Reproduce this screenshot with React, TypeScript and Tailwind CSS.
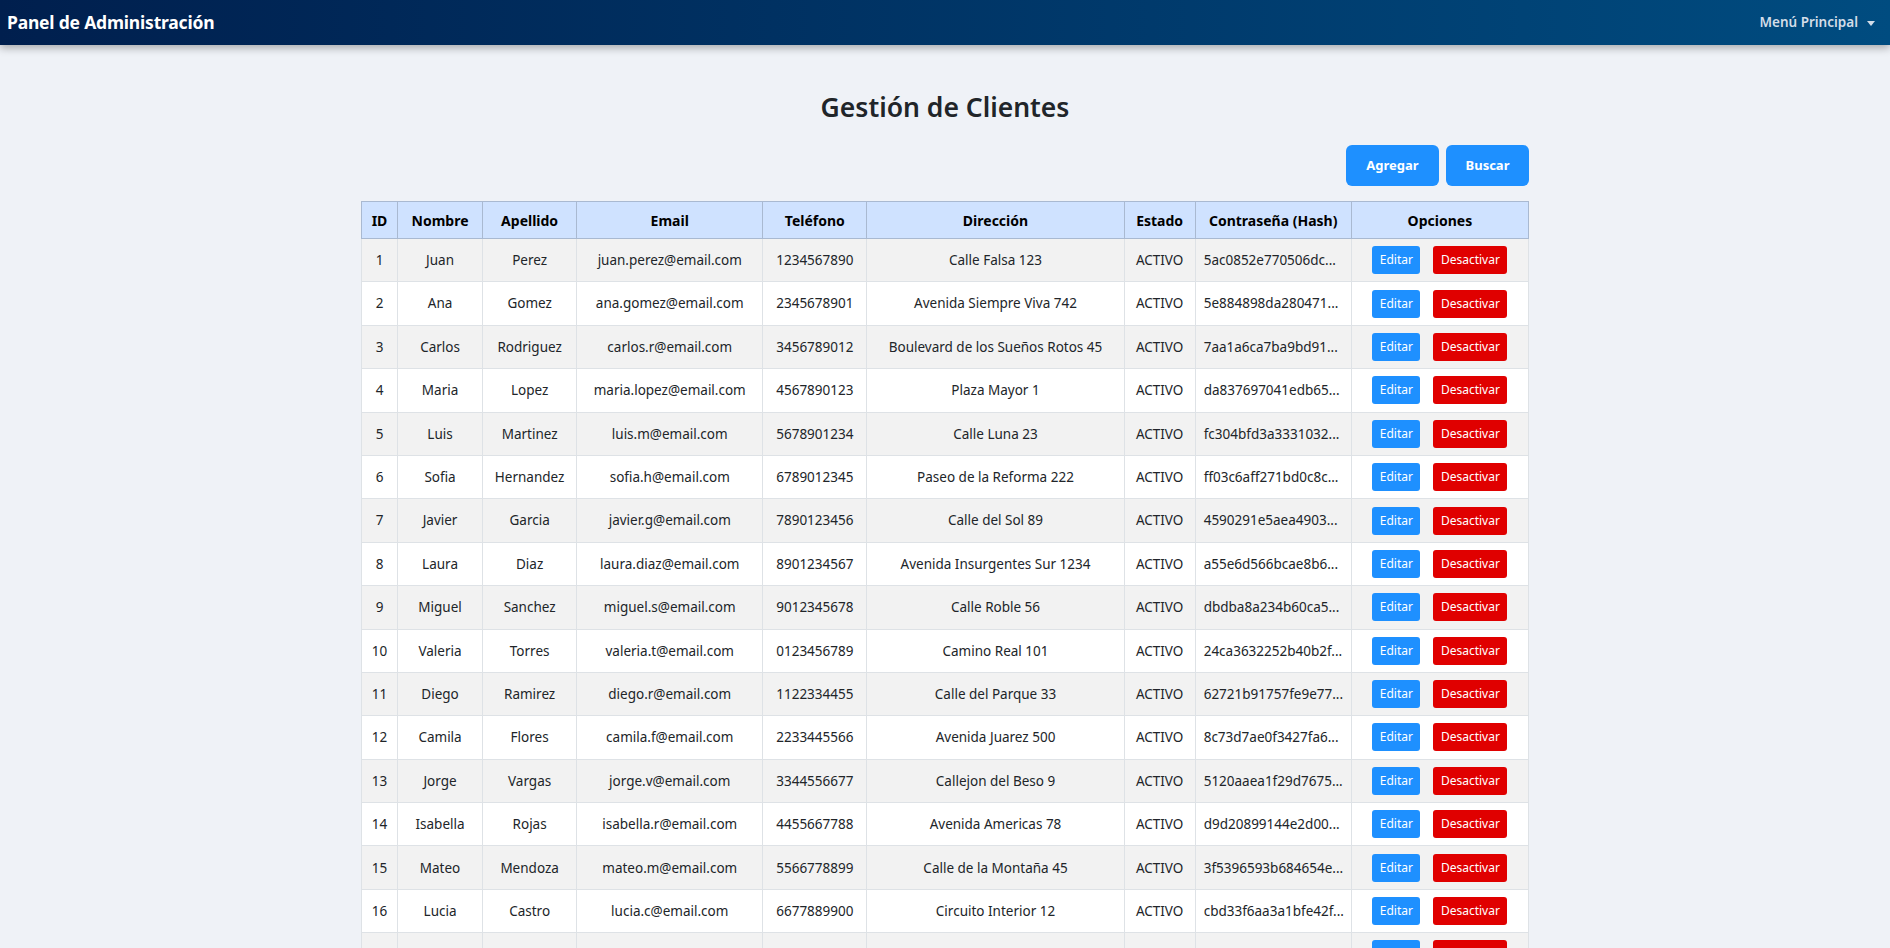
import React from "react";

type Row = {
  id: number;
  nombre: string;
  apellido: string;
  email: string;
  tel: string;
  dir: string;
  hash: string;
};

const rows: Row[] = [
  { id: 1, nombre: "Juan", apellido: "Perez", email: "juan.perez@email.com", tel: "1234567890", dir: "Calle Falsa 123", hash: "5ac0852e770506dc..." },
  { id: 2, nombre: "Ana", apellido: "Gomez", email: "ana.gomez@email.com", tel: "2345678901", dir: "Avenida Siempre Viva 742", hash: "5e884898da280471..." },
  { id: 3, nombre: "Carlos", apellido: "Rodriguez", email: "carlos.r@email.com", tel: "3456789012", dir: "Boulevard de los Sueños Rotos 45", hash: "7aa1a6ca7ba9bd91..." },
  { id: 4, nombre: "Maria", apellido: "Lopez", email: "maria.lopez@email.com", tel: "4567890123", dir: "Plaza Mayor 1", hash: "da837697041edb65..." },
  { id: 5, nombre: "Luis", apellido: "Martinez", email: "luis.m@email.com", tel: "5678901234", dir: "Calle Luna 23", hash: "fc304bfd3a3331032..." },
  { id: 6, nombre: "Sofia", apellido: "Hernandez", email: "sofia.h@email.com", tel: "6789012345", dir: "Paseo de la Reforma 222", hash: "ff03c6aff271bd0c8c..." },
  { id: 7, nombre: "Javier", apellido: "Garcia", email: "javier.g@email.com", tel: "7890123456", dir: "Calle del Sol 89", hash: "4590291e5aea4903..." },
  { id: 8, nombre: "Laura", apellido: "Diaz", email: "laura.diaz@email.com", tel: "8901234567", dir: "Avenida Insurgentes Sur 1234", hash: "a55e6d566bcae8b6..." },
  { id: 9, nombre: "Miguel", apellido: "Sanchez", email: "miguel.s@email.com", tel: "9012345678", dir: "Calle Roble 56", hash: "dbdba8a234b60ca5..." },
  { id: 10, nombre: "Valeria", apellido: "Torres", email: "valeria.t@email.com", tel: "0123456789", dir: "Camino Real 101", hash: "24ca3632252b40b2f..." },
  { id: 11, nombre: "Diego", apellido: "Ramirez", email: "diego.r@email.com", tel: "1122334455", dir: "Calle del Parque 33", hash: "62721b91757fe9e77..." },
  { id: 12, nombre: "Camila", apellido: "Flores", email: "camila.f@email.com", tel: "2233445566", dir: "Avenida Juarez 500", hash: "8c73d7ae0f3427fa6..." },
  { id: 13, nombre: "Jorge", apellido: "Vargas", email: "jorge.v@email.com", tel: "3344556677", dir: "Callejon del Beso 9", hash: "5120aaea1f29d7675..." },
  { id: 14, nombre: "Isabella", apellido: "Rojas", email: "isabella.r@email.com", tel: "4455667788", dir: "Avenida Americas 78", hash: "d9d20899144e2d00..." },
  { id: 15, nombre: "Mateo", apellido: "Mendoza", email: "mateo.m@email.com", tel: "5566778899", dir: "Calle de la Montaña 45", hash: "3f5396593b684654e..." },
  { id: 16, nombre: "Lucia", apellido: "Castro", email: "lucia.c@email.com", tel: "6677889900", dir: "Circuito Interior 12", hash: "cbd33f6aa3a1bfe42f..." },
  { id: 17, nombre: "Andres", apellido: "Morales", email: "andres.m@email.com", tel: "7788990011", dir: "Avenida Reforma 300", hash: "1a2b3c4d5e6f7a8b..." },
  { id: 18, nombre: "Paula", apellido: "Silva", email: "paula.s@email.com", tel: "8899001122", dir: "Calle Hidalgo 15", hash: "2b3c4d5e6f7a8b9c..." },
];

const font = { fontFamily: '"Noto Sans", "Open Sans", sans-serif' };

const cols: [string, string][] = [
  ["ID", "w-[36px]"],
  ["Nombre", "w-[85px]"],
  ["Apellido", "w-[94px]"],
  ["Email", "w-[186px]"],
  ["Teléfono", "w-[104px]"],
  ["Dirección", "w-[257px]"],
  ["Estado", "w-[71px]"],
  ["Contraseña (Hash)", "w-[156px]"],
  ["Opciones", "w-[177px]"],
];

export default function App() {
  return (
    <div className="min-h-screen bg-[#eff2f7]" style={font}>
      <nav className="relative z-10 flex h-[45px] items-center justify-between bg-gradient-to-r from-[#001f4e] to-[#004c80] px-[7px] shadow-[0_3px_8px_rgba(0,0,0,0.3)]">
        <span className="text-[17.5px] font-bold leading-none tracking-[-0.2px] text-white">
          Panel de Administración
        </span>
        <div className="flex items-center gap-[9px] pr-[8px]">
          <span className="text-[13.5px] font-semibold text-[#d3dde8]">Menú Principal</span>
          <span className="mt-[1px] h-0 w-0 border-x-[4px] border-t-[5px] border-x-transparent border-t-[#d3dde8]" />
        </div>
      </nav>

      <main className="mx-auto max-w-[1200px] px-4">
        <h1 className="mt-[45px] text-center text-[26.5px] font-semibold leading-[34px] text-[#212529]">
          Gestión de Clientes
        </h1>
        <div className="mt-[21px] flex justify-end gap-[7px]">
          <button className="h-[41px] w-[93px] rounded-[6px] bg-[#1e90ff] text-[13px] font-bold text-white">
            Agregar
          </button>
          <button className="h-[41px] w-[83px] rounded-[6px] bg-[#1e90ff] text-[13px] font-bold text-white">
            Buscar
          </button>
        </div>

        <table className="mt-[15px] w-full table-fixed border-collapse text-[13.5px] text-[#212529]">
          <thead>
            <tr className="h-[37px] bg-[#cfe2ff]">
              {cols.map(([label, w]) => (
                <th
                  key={label}
                  className={`${w} border border-[#a9b9d1] px-[4px] py-0 text-center text-[14px] font-bold text-black`}
                >
                  {label}
                </th>
              ))}
            </tr>
          </thead>
          <tbody>
            {rows.map((r, i) => (
              <tr key={r.id} className={i % 2 === 0 ? "h-[43.4px] bg-[#f2f2f2]" : "h-[43.4px] bg-white"}>
                <td className="border border-[#dee2e6] px-[2px] text-center">{r.id}</td>
                <td className="border border-[#dee2e6] px-[4px] text-center">{r.nombre}</td>
                <td className="border border-[#dee2e6] px-[4px] text-center">{r.apellido}</td>
                <td className="border border-[#dee2e6] px-[4px] text-center">{r.email}</td>
                <td className="border border-[#dee2e6] px-[4px] text-center">{r.tel}</td>
                <td className="border border-[#dee2e6] px-[4px] text-center">{r.dir}</td>
                <td className="border border-[#dee2e6] px-[2px] text-center">ACTIVO</td>
                <td className="whitespace-nowrap border border-[#dee2e6] px-[8px] text-left">{r.hash}</td>
                <td className="border border-[#dee2e6] px-[4px] text-center">
                  <div className="flex items-center justify-center gap-[13px]">
                    <button className="h-[28px] w-[48px] rounded-[3px] bg-[#1e90ff] text-[12px] text-white">
                      Editar
                    </button>
                    <button className="h-[28px] w-[74px] rounded-[3px] bg-[#e00000] text-[12px] text-white">
                      Desactivar
                    </button>
                  </div>
                </td>
              </tr>
            ))}
          </tbody>
        </table>
      </main>
    </div>
  );
}
